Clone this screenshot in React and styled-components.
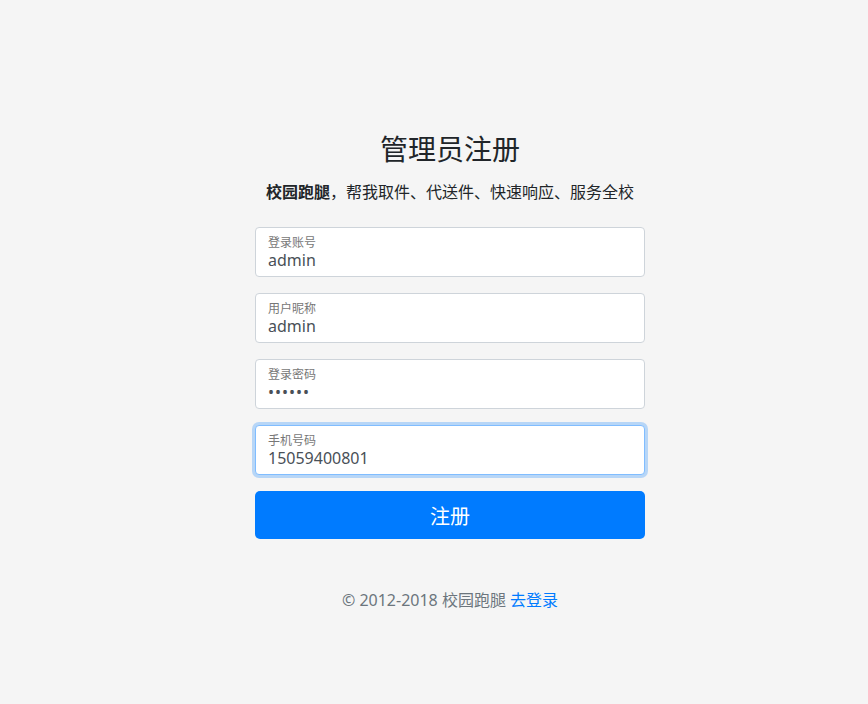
import React from "react";
import styled, { createGlobalStyle } from "styled-components";

const Global = createGlobalStyle`
  html, body { margin: 0; padding: 0; background: #f5f5f5; }
  body { font-family: "Noto Sans", "Noto Sans CJK SC", sans-serif; color: #212529; }
  * { box-sizing: border-box; }
`;

const Page = styled.div`
  min-height: 704px;
  padding-top: 131px;
  padding-left: 32px;
  display: flex;
  justify-content: center;
`;

const Form = styled.form`
  width: 390px;
  display: flex;
  flex-direction: column;
`;

const Title = styled.h1`
  margin: 0 0 14px;
  font-size: 28px;
  font-weight: 400;
  line-height: 34px;
  text-align: center;
  color: #212529;
  font-family: "Noto Sans CJK SC", sans-serif;
`;

const Subtitle = styled.p`
  margin: 0 0 24px;
  font-size: 16px;
  line-height: 24px;
  text-align: center;
  font-family: "Noto Sans CJK SC", sans-serif;
  b { font-weight: 700; }
`;

const Field = styled.label`
  display: flex;
  flex-direction: column;
  height: 50px;
  margin-bottom: 16px;
  padding: 6px 12px;
  background: #fff;
  border: 1px solid ${(p) => (p.$focus ? "#80bdff" : "#ced4da")};
  border-radius: 4px;
  box-shadow: ${(p) => (p.$focus ? "0 0 0 3px rgba(0,123,255,.25)" : "none")};
`;

const FieldLabel = styled.span`
  font-size: 12px;
  line-height: 16px;
  color: #777;
  font-family: "Noto Sans CJK SC", sans-serif;
`;

const Input = styled.input`
  border: 0;
  outline: 0;
  padding: 0;
  margin: 0;
  height: 20px;
  font-size: 16px;
  line-height: 20px;
  color: #495057;
  background: transparent;
  letter-spacing: ${(p) => (p.type === "password" ? "1px" : "0")};
  font-family: "Noto Sans", "Noto Sans CJK SC", sans-serif;
`;

const Button = styled.button`
  height: 48px;
  border: 0;
  border-radius: 5px;
  background: #007bff;
  color: #fff;
  font-size: 20px;
  font-family: "Noto Sans CJK SC", sans-serif;
  cursor: pointer;
`;

const Footer = styled.p`
  margin: 49px 0 0;
  text-align: center;
  font-size: 16px;
  line-height: 24px;
  color: #6c757d;
  font-family: "Noto Sans", "Noto Sans CJK SC", sans-serif;
  a { color: #007bff; text-decoration: none; }
`;

const fields = [
  { label: "登录账号", value: "admin", type: "text" },
  { label: "用户昵称", value: "admin", type: "text" },
  { label: "登录密码", value: "123456", type: "password" },
  { label: "手机号码", value: "15059400801", type: "text", focus: true },
];

export default function App() {
  return (
    <>
      <Global />
      <Page>
        <Form onSubmit={(e) => e.preventDefault()}>
          <Title>管理员注册</Title>
          <Subtitle>
            <b>校园跑腿</b>，帮我取件、代送件、快速响应、服务全校
          </Subtitle>
          {fields.map((f) => (
            <Field key={f.label} $focus={f.focus}>
              <FieldLabel>{f.label}</FieldLabel>
              <Input type={f.type} defaultValue={f.value} />
            </Field>
          ))}
          <Button type="submit">注册</Button>
          <Footer>
            © 2012-2018 校园跑腿 <a href="#">去登录</a>
          </Footer>
        </Form>
      </Page>
    </>
  );
}
